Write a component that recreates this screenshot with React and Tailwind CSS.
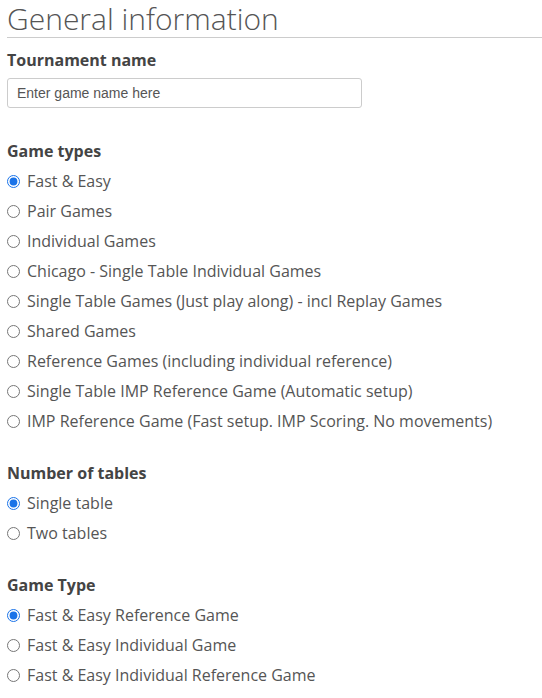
import React, { useState } from "react";

const gameTypes = [
  "Fast & Easy",
  "Pair Games",
  "Individual Games",
  "Chicago - Single Table Individual Games",
  "Single Table Games (Just play along) - incl Replay Games",
  "Shared Games",
  "Reference Games (including individual reference)",
  "Single Table IMP Reference Game (Automatic setup)",
  "IMP Reference Game (Fast setup. IMP Scoring. No movements)",
];

const tableOptions = ["Single table", "Two tables"];

const fastEasyTypes = [
  "Fast & Easy Reference Game",
  "Fast & Easy Individual Game",
  "Fast & Easy Individual Reference Game",
];

const RadioGroup = ({ name, title, options, value, onChange }) => (
  <div className="mb-[22px]">
    <h4 className="h-[30px] flex items-center font-bold text-[16px] text-[#444]">{title}</h4>
    {options.map((opt, i) => (
      <label key={opt} className="h-[30px] flex items-center cursor-pointer">
        <input
          type="radio"
          name={name}
          checked={value === i}
          onChange={() => onChange(i)}
          className="m-0 w-[13px] h-[13px] accent-[#1a73e8]"
        />
        <span className="ml-[7px] text-[16px] text-[#555]">{opt}</span>
      </label>
    ))}
  </div>
);

export default function App() {
  const [gameType, setGameType] = useState(0);
  const [tables, setTables] = useState(0);
  const [feType, setFeType] = useState(0);

  return (
    <div
      className="pl-[7px] bg-white text-[#555]"
      style={{ fontFamily: '"Open Sans", sans-serif' }}
    >
      <h1 className="text-[30px] leading-[37px] font-light text-[#555] border-b border-[#ccc]">
        General information
      </h1>

      <div className="mt-[11px] mb-[28px]">
        <label className="block font-bold text-[16px] text-[#444] leading-[22px] mb-[7px]">
          Tournament name
        </label>
        <input
          type="text"
          placeholder="Enter game name here"
          className="w-[355px] h-[30px] px-[9px] border border-[#ccc] rounded-[3px] text-[14px] text-[#555] placeholder:text-[#555] outline-none"
          style={{ fontFamily: '"Liberation Sans", Arial, sans-serif' }}
        />
      </div>

      <RadioGroup name="gametypes" title="Game types" options={gameTypes} value={gameType} onChange={setGameType} />
      <RadioGroup name="tables" title="Number of tables" options={tableOptions} value={tables} onChange={setTables} />
      <RadioGroup name="fetype" title="Game Type" options={fastEasyTypes} value={feType} onChange={setFeType} />
    </div>
  );
}
